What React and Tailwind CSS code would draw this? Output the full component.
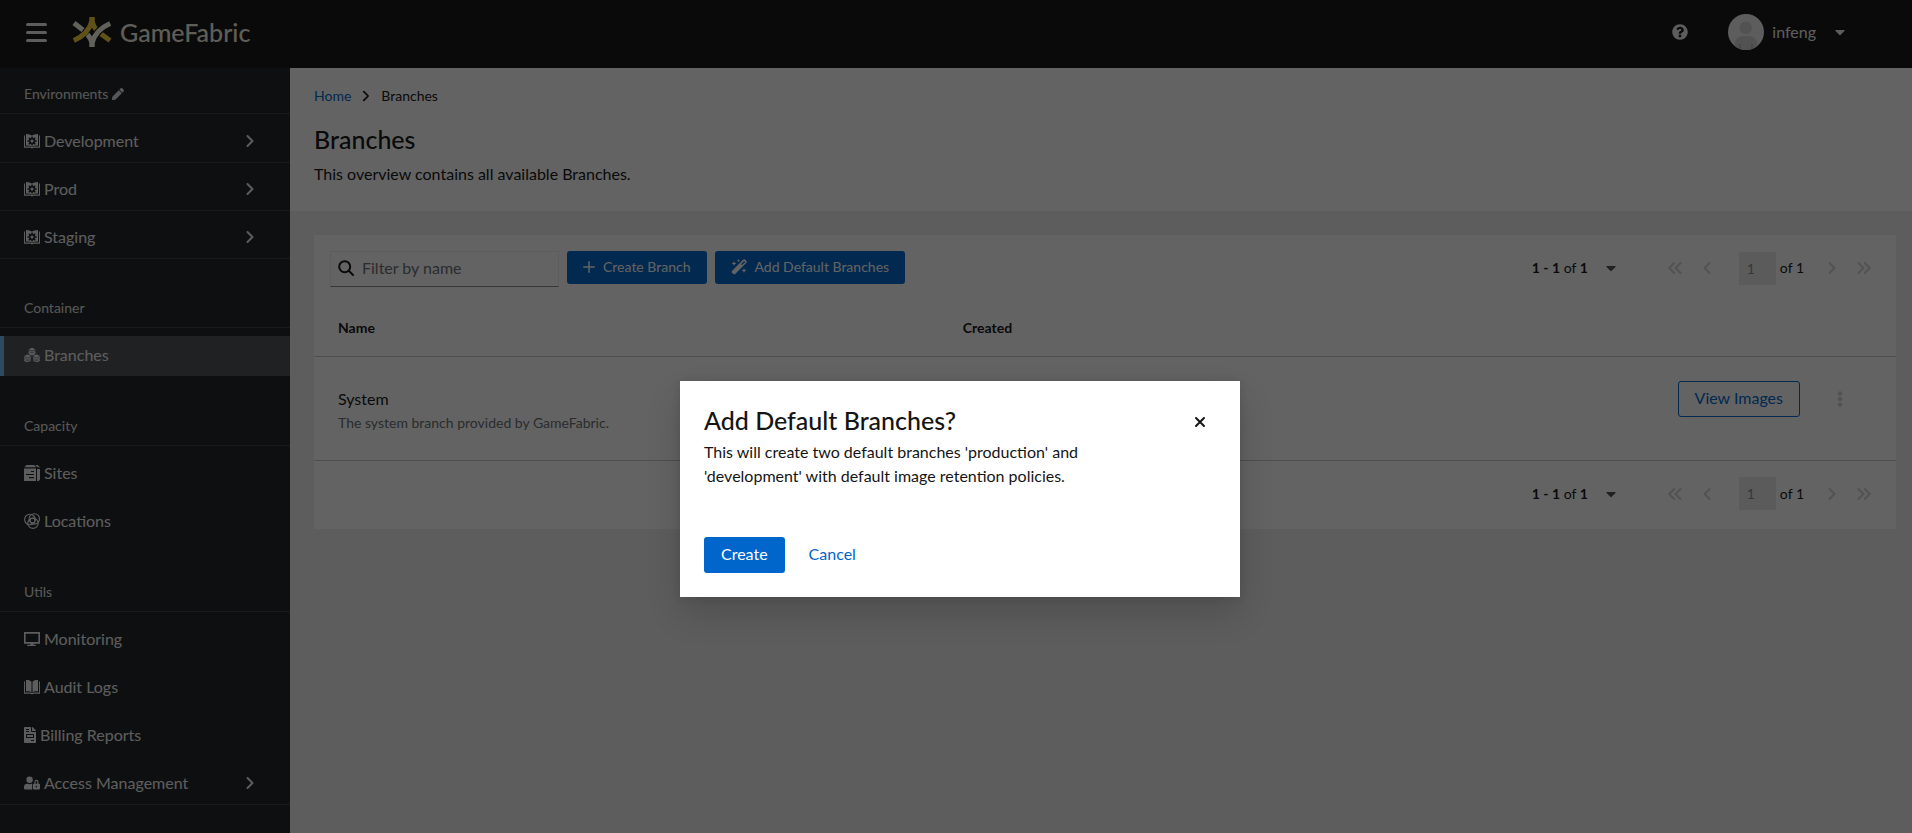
import { FaCaretDown, FaEllipsisV, FaFileInvoice, FaPen, FaQuestionCircle, FaUserLock } from "react-icons/fa";

function Logo() {
  return (
    <svg viewBox="0 0 40 30" className="h-[30px] w-10" aria-hidden="true">
      <path d="M2 6 11 13" stroke="#fbf7e6" strokeWidth="5" fill="none" />
      <path d="M29 17 38 23.500" stroke="#f7d038" strokeWidth="5" fill="none" />
      <path d="M20 0v4C17.500 13 10 20 1.800 23.500" stroke="#f7d038" strokeWidth="5" fill="none" />
      <path d="M20 0v4c1 4 2.300 6.500 4.500 9" stroke="#f7d038" strokeWidth="5" fill="none" />
      <path d="M20 30v-4C22.500 17 30 10 38.200 6.500" stroke="#151515" strokeWidth="7" fill="none" />
      <path d="M20 30v-4C22.500 17 30 10 38.200 6.500" stroke="#fbf7e6" strokeWidth="5" fill="none" />
      <path d="M20 30v-4c-1-4-2.300-6-4.500-8.500" stroke="#fbf7e6" strokeWidth="5" fill="none" />
    </svg>
  );
}

function StrokeIcon({ className = "size-4", width = 2, children }) {
  return (
    <svg
      viewBox="0 0 16 16"
      className={className}
      fill="none"
      stroke="currentColor"
      strokeWidth={width}
      strokeLinecap="round"
      strokeLinejoin="round"
      aria-hidden="true"
    >
      {children}
    </svg>
  );
}

function ChevronRight({ className }) {
  return (
    <StrokeIcon className={className}>
      <path d="M5.500 3 10.500 8l-5 5" />
    </StrokeIcon>
  );
}

function ChevronLeft() {
  return (
    <StrokeIcon>
      <path d="M10.500 3 5.500 8l5 5" />
    </StrokeIcon>
  );
}

function DoubleRight() {
  return (
    <StrokeIcon>
      <path d="M2.500 3 7.500 8l-5 5M8.800 3l5 5-5 5" />
    </StrokeIcon>
  );
}

function DoubleLeft() {
  return (
    <StrokeIcon>
      <path d="M13.500 3 8.500 8l5 5M7.200 3l-5 5 5 5" />
    </StrokeIcon>
  );
}

function SearchIcon() {
  return (
    <StrokeIcon className="size-4 shrink-0">
      <circle cx="6.700" cy="6.700" r="5.500" />
      <path d="m10.800 10.800 4.200 4.200" />
    </StrokeIcon>
  );
}

function PlusIcon() {
  return (
    <StrokeIcon className="size-3" width={2}>
      <path d="M8 1v14M1 8h14" />
    </StrokeIcon>
  );
}

function CloseIcon() {
  return (
    <StrokeIcon>
      <path d="m4 4 8 8M12 4l-8 8" />
    </StrokeIcon>
  );
}

function BookFrame({ children }) {
  return (
    <svg viewBox="0 0 16 16" className="size-4" fill="currentColor" aria-hidden="true">
      <path d="M0 2.500h1v11h5.500c.6 0 .8.300 1.500.300s.9-.3 1.500-.3H15v-11h1v12.300H9.800c-.6 0-.8.500-1.800.5s-1.200-.5-1.800-.5H0z" />
      {children}
    </svg>
  );
}

function BlueprintIcon() {
  return (
    <BookFrame>
      <path
        fillRule="evenodd"
        d="M2 1c2-.2 4 .6 6 1.500 2-.9 4-1.700 6-1.500v11.500c-2-.2-4-.1-6 .9-2-1-4-1.100-6-.9zM7.300 3.500v1.300l-.9.400-1-.9-1.100 1.100.9 1-.4.900H3.500v1.500h1.300l.4.900-.9 1 1.100 1.100 1-.9.900.4v1.200h1.500v-1.200l.9-.4 1 .9 1.100-1.100-.9-1 .4-.9h1.300V7.300h-1.300l-.4-.9.9-1-1.100-1.100-1 .9-.9-.4V3.500zM8 6.500a1.500 1.500 0 1 1 0 3 1.500 1.500 0 0 1 0-3z"
      />
    </BookFrame>
  );
}

function CatalogIcon() {
  return (
    <BookFrame>
      <path d="M2 1c2-.2 3.800.3 5 1.200v10.600c-1.400-.6-3.200-.7-5-.4zM14 1c-2-.2-3.800.3-5 1.200v10.600c1.400-.6 3.200-.7 5-.4z" />
      <path d="M7 2.500h2V13H7z" opacity=".5" />
    </BookFrame>
  );
}

function Stack({ x, y }) {
  return (
    <g transform={`translate(${x} ${y})`}>
      <path d="M3.500-.2 6.900 1.300 3.500 2.800.1 1.300z" fill="currentColor" />
      <path
        d="M.2 2.300c1.200 1.900 5.400 1.900 6.600 0M.2 3.900c1.200 1.900 5.400 1.900 6.600 0M.4 5.400c1.200 1.900 5 1.900 6.200 0"
        fill="none"
        stroke="currentColor"
        strokeWidth="1.100"
      />
    </g>
  );
}

function RegistryIcon() {
  return (
    <svg viewBox="0 0 16 16" className="size-4" aria-hidden="true">
      <Stack x={4.5} y={1} />
      <Stack x={0} y={7.6} />
      <Stack x={9} y={7.6} />
    </svg>
  );
}

function ServerGroupIcon() {
  return (
    <svg viewBox="0 0 16 16" className="size-4" fill="currentColor" aria-hidden="true">
      <path d="M2.500 0h7.700l2 2.300H.3zM11.300 0h2.200L16 2.300h-2.600zM13 4h3v10.500l-1.200 1.500H13z" />
      <path fillRule="evenodd" d="M0 3.400h12V16H0zM7 6v1h3V6zM2 9v1h8V9zM5 12v1.200h5V12z" />
    </svg>
  );
}

function ZoneIcon() {
  return (
    <StrokeIcon width={1.1}>
      <circle cx="5.900" cy="6.500" r="5.300" />
      <circle cx="10.300" cy="5.900" r="5.200" />
      <circle cx="9" cy="10.200" r="5.200" />
      <circle cx="8.500" cy="7.500" r="2.400" />
    </StrokeIcon>
  );
}

function ScreenIcon() {
  return (
    <svg viewBox="0 0 16 16" className="size-4" fill="currentColor" aria-hidden="true">
      <path
        fillRule="evenodd"
        d="M0 1h16v11.700H9.500v1.100h2.300V15H3.200v-1.200h3.300v-1.100H0zM1.600 2.700V11h12.800V2.700z"
      />
    </svg>
  );
}

function MagicIcon() {
  return (
    <svg viewBox="0 0 16 16" className="size-4" fill="currentColor" aria-hidden="true">
      <path
        fillRule="evenodd"
        d="M12.300.6a1.300 1.300 0 0 1 1.800 0l1.300 1.300a1.300 1.300 0 0 1 0 1.800L4.200 15a1.300 1.300 0 0 1-1.800 0L1 13.700a1.300 1.300 0 0 1 0-1.800zM13.200 2 10 5.200 11 6.100l3.200-3.200z"
      />
      <path d="M3 2l.7 1.800 1.800.7-1.800.7L3 7l-.7-1.800L.5 4.500l1.800-.7zM7.500 0l.5 1.100 1.100.5L8 2.100l-.5 1.100L7 2.100l-1.100-.5L7 1.100zM13 9l.7 1.800 1.800.7-1.800.7L13 14l-.7-1.800-1.800-.7 1.800-.7z" />
    </svg>
  );
}

function Avatar() {
  return (
    <svg viewBox="0 0 36 36" className="size-9 rounded-full" aria-hidden="true">
      <rect width="36" height="36" fill="#f0f0f0" />
      <circle cx="17.700" cy="13.800" r="6.300" fill="#d2d2d2" />
      <path d="M6.500 36v-5c0-5.500 4-9 8-9h6.500c4.500 0 8.500 3.500 8.500 9v5z" fill="#d2d2d2" />
      <path d="M11 30h2v6h-2zM23 30h2v6h-2z" fill="#b8bbbe" />
    </svg>
  );
}

const sections = [
  {
    title: "Environments",
    editable: true,
    items: [
      { label: "Development", icon: BlueprintIcon, expandable: true },
      { label: "Prod", icon: BlueprintIcon, expandable: true },
      { label: "Staging", icon: BlueprintIcon, expandable: true },
    ],
  },
  { title: "Container", items: [{ label: "Branches", icon: RegistryIcon, current: true }] },
  {
    title: "Capacity",
    items: [
      { label: "Sites", icon: ServerGroupIcon },
      { label: "Locations", icon: ZoneIcon },
    ],
  },
  {
    title: "Utils",
    items: [
      { label: "Monitoring", icon: ScreenIcon },
      { label: "Audit Logs", icon: CatalogIcon },
      { label: "Billing Reports", icon: FaFileInvoice, narrow: true },
      { label: "Access Management", icon: FaUserLock, expandable: true },
    ],
  },
];

function NavItem({ item }) {
  const Icon = item.icon;
  const content = (
    <>
      <Icon className={item.narrow ? "h-4 w-3" : "h-4 w-4"} />
      <span>{item.label}</span>
    </>
  );
  if (item.expandable) {
    return (
      <li className="pt-2 shadow-[0_1px_0_#3c3f42]">
        <button type="button" className="flex h-10 w-full items-center gap-1 pr-8 pb-0.5 pl-6 text-left">
          {content}
          <ChevronRight className="ml-auto size-4" />
        </button>
      </li>
    );
  }
  return (
    <li className="pt-2">
      <a
        href="#"
        aria-current={item.current ? "page" : undefined}
        className={
          item.current
            ? "flex h-10 items-center gap-1 border-l-4 border-[#73bcf7] bg-[#4f5255] pb-0.5 pl-5"
            : "flex h-10 items-center gap-1 pb-0.5 pl-6"
        }
      >
        {content}
      </a>
    </li>
  );
}

function Sidebar() {
  return (
    <nav
      aria-label="Main"
      className="flex w-[290px] shrink-0 flex-col gap-8 bg-[#212427] pt-2 text-[#f0f0f0]"
    >
      {sections.map((section) => (
        <section key={section.title}>
          <h2 className="flex h-[38px] items-center gap-1 border-b border-[#3c3f42] pb-0.5 pl-6 text-sm text-[#e0e0e0]">
            {section.title}
            {section.editable && (
              <button type="button" aria-label="Edit environments">
                <FaPen className="size-3" />
              </button>
            )}
          </h2>
          <ul>
            {section.items.map((item) => (
              <NavItem key={item.label} item={item} />
            ))}
          </ul>
        </section>
      ))}
    </nav>
  );
}

function Masthead() {
  return (
    <header className="flex h-[68px] items-center bg-[#151515] pr-16 pb-1 pl-6 text-[#f0f0f0]">
      <button type="button" aria-label="Toggle navigation" className="flex w-6 flex-col items-center gap-[5px]">
        <span className="h-[3px] w-[21px] rounded-full bg-current" />
        <span className="h-[3px] w-[21px] rounded-full bg-current" />
        <span className="h-[3px] w-[21px] rounded-full bg-current" />
      </button>
      <a href="#" className="ml-6 flex items-center gap-2">
        <Logo />
        <span className="text-[25px] font-medium text-[#f3f0e3]">GameFabric</span>
      </a>
      <button type="button" aria-label="Help" className="ml-auto">
        <FaQuestionCircle className="size-4" />
      </button>
      <button type="button" className="ml-10 flex items-center gap-2">
        <Avatar />
        infeng
        <FaCaretDown className="ml-2 size-4" />
      </button>
    </header>
  );
}

function Pagination({ id }) {
  return (
    <div className="ml-auto flex h-9 items-center pb-0.5 text-sm">
      <button type="button" className="flex items-center gap-[15px]">
        <span>
          <b>1 - 1</b> of <b>1</b>
        </span>
        <FaCaretDown className="size-4 text-[#4f5255]" />
      </button>
      <div className="ml-10 flex items-center text-[#d2d2d2]">
        <button type="button" disabled aria-label="First page" className="flex w-8 justify-center">
          <DoubleLeft />
        </button>
        <button type="button" disabled aria-label="Previous page" className="flex w-8 justify-center">
          <ChevronLeft />
        </button>
      </div>
      <input
        id={id}
        aria-label="Current page"
        disabled
        defaultValue="1"
        className="ml-4 h-[33px] w-[37px] bg-[#ebebeb] pl-2 text-[#8a8d90]"
      />
      <label htmlFor={id} className="ml-1">
        of 1
      </label>
      <div className="ml-3 flex items-center text-[#d2d2d2]">
        <button type="button" disabled aria-label="Next page" className="flex w-8 justify-center">
          <ChevronRight className="size-4" />
        </button>
        <button type="button" disabled aria-label="Last page" className="flex w-8 justify-center">
          <DoubleRight />
        </button>
      </div>
    </div>
  );
}

function BranchesCard() {
  return (
    <div className="bg-white">
      <div className="flex items-start gap-2 p-4">
        <div className="flex h-9 w-[229px] items-center gap-2 border border-[#f0f0f0] border-b-[#8a8d90] pb-0.5 pl-[7px]">
          <SearchIcon />
          <input
            type="search"
            aria-label="Filter by name"
            placeholder="Filter by name"
            className="w-full min-w-0 bg-transparent outline-none placeholder:text-[#6a6e73]"
          />
        </div>
        <button
          type="button"
          className="flex h-[33px] items-center gap-2 rounded-[3px] bg-[#06c] px-4 pb-0.5 text-sm text-white"
        >
          <PlusIcon />
          Create Branch
        </button>
        <button
          type="button"
          className="flex h-[33px] items-center gap-2 rounded-[3px] bg-[#06c] px-4 pb-0.5 text-sm text-white"
        >
          <MagicIcon />
          Add Default Branches
        </button>
        <Pagination id="page-top" />
      </div>
      <table className="w-full table-fixed text-left">
        <thead>
          <tr className="h-[53px] border-b border-[#c8c8c8] text-sm">
            <th className="w-2/5 pb-0.5 pl-6 font-bold">Name</th>
            <th className="pb-0.5 pl-4 font-bold">Created</th>
            <th aria-label="Actions" className="w-[280px]" />
          </tr>
        </thead>
        <tbody>
          <tr className="h-[104px] border-b border-[#c8c8c8] align-top">
            <td className="pt-[30px] pl-6">
              <div className="leading-6">System</div>
              <div className="text-sm leading-6 text-[#6a6e73]">The system branch provided by GameFabric.</div>
            </td>
            <td />
            <td className="pt-6 pr-12">
              <div className="flex items-center justify-end gap-8">
                <button
                  type="button"
                  className="h-9 rounded-[3px] border border-[#06c] px-4 pb-0.5 text-[#06c]"
                >
                  View Images
                </button>
                <button type="button" disabled aria-label="Row actions" className="text-[#d2d2d2]">
                  <FaEllipsisV className="size-4" />
                </button>
              </div>
            </td>
          </tr>
        </tbody>
      </table>
      <div className="flex p-4">
        <Pagination id="page-bottom" />
      </div>
    </div>
  );
}

function Dialog() {
  return (
    <div className="absolute inset-0 flex items-start justify-center bg-[#030303]/62 pt-[381px] pl-2">
      <div
        role="dialog"
        aria-modal="true"
        aria-labelledby="dialog-title"
        className="w-[560px] bg-white p-6 shadow-[0_16px_32px_rgba(3,3,3,0.16),0_0_8px_rgba(3,3,3,0.1)]"
      >
        <div className="flex items-center justify-between pr-2">
          <h2 id="dialog-title" className="text-[25px] leading-[30px] font-medium">
            Add Default Branches?
          </h2>
          <button type="button" aria-label="Close" className="pt-1">
            <CloseIcon />
          </button>
        </div>
        <p className="mt-[5px] pr-24 leading-6">
          This will create two default branches 'production' and 'development' with default image retention
          policies.
        </p>
        <div className="mt-[49px] flex gap-2">
          <button type="button" className="h-9 rounded-[3px] bg-[#06c] px-[17px] pb-0.5 text-white">
            Create
          </button>
          <button type="button" className="h-9 px-4 pb-0.5 text-[#06c]">
            Cancel
          </button>
        </div>
      </div>
    </div>
  );
}

export default function App() {
  return (
    <div className="relative flex min-h-screen flex-col font-['Lato','Liberation_Sans',sans-serif] text-base leading-6 text-[#151515]">
      <Masthead />
      <div className="flex flex-1">
        <Sidebar />
        <main className="min-w-0 flex-1 bg-[#f0f0f0]">
          <div className="bg-white px-6 pt-4 pb-6">
            <nav aria-label="Breadcrumb" className="flex items-center gap-2 text-sm leading-6">
              <a href="#" className="text-[#06c]">
                Home
              </a>
              <ChevronRight className="size-3.5" />
              <span aria-current="page">Branches</span>
            </nav>
            <h1 className="mt-4 text-[25px] leading-[30px] font-medium">Branches</h1>
            <p className="mt-2 pb-px leading-6">This overview contains all available Branches.</p>
          </div>
          <div className="py-6 pr-4 pl-6">
            <BranchesCard />
          </div>
        </main>
      </div>
      <Dialog />
    </div>
  );
}
